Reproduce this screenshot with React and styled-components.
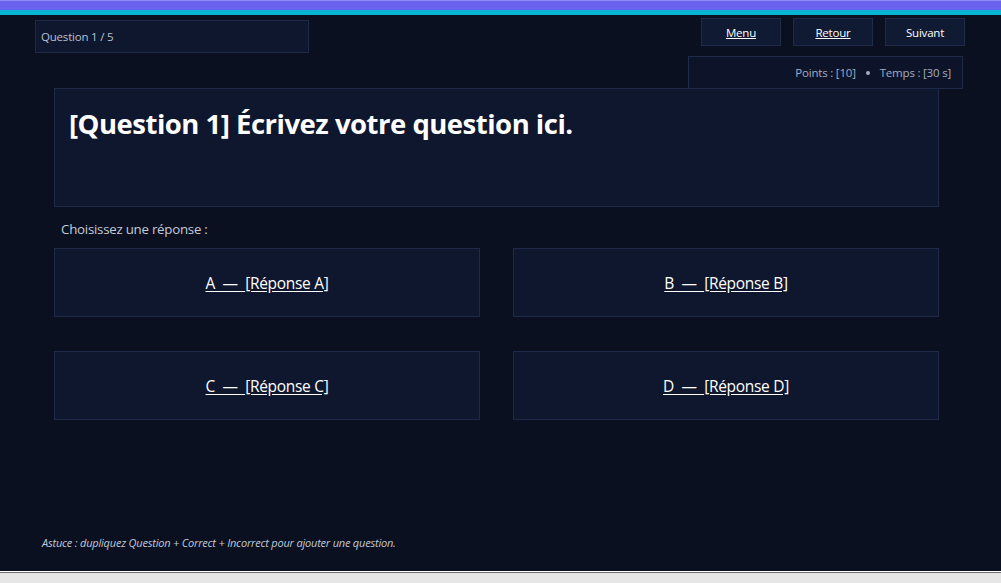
import styled, { createGlobalStyle } from 'styled-components';

const GlobalStyle = createGlobalStyle`
  html, body {
    margin: 0;
    padding: 0;
    background: #e6e6e6;
  }
  body {
    font-family: "Open Sans", "Noto Sans", sans-serif;
  }
`;

const answers = [
    { letter: 'A', label: '[Réponse A]' },
    { letter: 'B', label: '[Réponse B]' },
    { letter: 'C', label: '[Réponse C]' },
    { letter: 'D', label: '[Réponse D]' },
];

export default function App() {
    return (
        <>
            <GlobalStyle />
            <Screen>
                <TopBar />
                <AccentBar />
                <Header>
                    <Counter>Question 1 / 5</Counter>
                    <HeaderRight>
                        <Nav>
                            <NavButton $link>Menu</NavButton>
                            <NavButton $link>Retour</NavButton>
                            <NavButton>Suivant</NavButton>
                        </Nav>
                        <Stats>
                            Points : [10]
                            <Dot />
                            Temps : [30 s]
                        </Stats>
                    </HeaderRight>
                </Header>
                <Main>
                    <QuestionCard>
                        <Title>[Question 1] Écrivez votre question ici.</Title>
                    </QuestionCard>
                    <Prompt>Choisissez une réponse :</Prompt>
                    <AnswerGrid>
                        {answers.map((a) => (
                            <Answer key={a.letter}>
                                <span>{a.letter}&nbsp; —&nbsp; {a.label}</span>
                            </Answer>
                        ))}
                    </AnswerGrid>
                </Main>
                <Tip>Astuce : dupliquez Question + Correct + Incorrect pour ajouter une question.</Tip>
            </Screen>
            <Scrollbar />
        </>
    );
}

const Screen = styled.div`
  height: 571px;
  background: #0b1020;
  display: flex;
  flex-direction: column;
  overflow: hidden;
`;

const TopBar = styled.div`
  height: 10px;
  background: #6b63f0;
  border-top: 1px solid #8f8af5;
  box-sizing: border-box;
`;

const AccentBar = styled.div`
  height: 5px;
  background: #08b4d4;
`;

const Header = styled.div`
  display: flex;
  justify-content: space-between;
  align-items: flex-start;
  padding: 0 36px 0 35px;
  height: 73px;
`;

const Counter = styled.div`
  margin-top: 5px;
  width: 274px;
  height: 33px;
  box-sizing: border-box;
  padding-left: 5px;
  display: flex;
  align-items: center;
  background: #0f172e;
  border: 1px solid #1f2a48;
  color: #b8c0d0;
  font-size: 11.5px;
  letter-spacing: -0.2px;
`;

const HeaderRight = styled.div`
  display: flex;
  flex-direction: column;
  align-items: flex-end;
`;

const Nav = styled.div`
  display: flex;
  gap: 12px;
  margin-top: 3px;
`;

const NavButton = styled.button`
  width: 80px;
  height: 28px;
  box-sizing: border-box;
  background: #111a33;
  border: 1px solid #1f2a48;
  color: #ffffff;
  font-family: inherit;
  font-size: 11.5px;
  letter-spacing: -0.2px;
  text-decoration: ${(p) => (p.$link ? 'underline' : 'none')};
  padding: 0;
  cursor: pointer;
`;

const Stats = styled.div`
  margin-top: 10px;
  margin-right: 2px;
  width: 275px;
  height: 33px;
  box-sizing: border-box;
  padding-right: 11px;
  display: flex;
  align-items: center;
  justify-content: flex-end;
  background: #0d1429;
  border: 1px solid #1f2a48;
  color: #a4adc0;
  font-size: 11.5px;
  letter-spacing: -0.2px;
`;

const Dot = styled.span`
  width: 4px;
  height: 4px;
  border-radius: 50%;
  background: #a4adc0;
  margin: 1px 10px 0 10px;
`;

const Main = styled.div`
  padding: 0 62px 0 54px;
  display: flex;
  flex-direction: column;
`;

const QuestionCard = styled.div`
  height: 119px;
  box-sizing: border-box;
  background: #0f172e;
  border: 1px solid #1f2a48;
  padding: 15px 14px;
`;

const Title = styled.h1`
  margin: 0;
  color: #ffffff;
  font-size: 27.5px;
  font-weight: 700;
  letter-spacing: -0.5px;
  line-height: 40px;
`;

const Prompt = styled.div`
  margin: 14px 0 0 7px;
  height: 17px;
  line-height: 17px;
  color: #c4cbd8;
  font-size: 13.3px;
  letter-spacing: -0.25px;
`;

const AnswerGrid = styled.div`
  margin-top: 10px;
  display: grid;
  grid-template-columns: 1fr 1fr;
  column-gap: 33px;
  row-gap: 34px;
`;

const Answer = styled.div`
  height: 69px;
  box-sizing: border-box;
  background: #0f172e;
  border: 1px solid #1f2a48;
  display: flex;
  align-items: center;
  justify-content: center;
  color: #ffffff;
  font-size: 15.5px;
  letter-spacing: -0.3px;
  & > span {
    text-decoration: underline;
    text-underline-offset: 2px;
  }
`;

const Tip = styled.div`
  margin-top: auto;
  margin-bottom: 21px;
  padding-left: 42px;
  color: #c0c8d8;
  font-size: 11px;
  font-style: italic;
  letter-spacing: -0.2px;
`;

const Scrollbar = styled.div`
  height: 12px;
  background: #e6e6e6;
  border-top: 1px solid #ffffff;
  box-shadow: inset 0 1px 0 #6e6e6e;
  box-sizing: border-box;
`;
